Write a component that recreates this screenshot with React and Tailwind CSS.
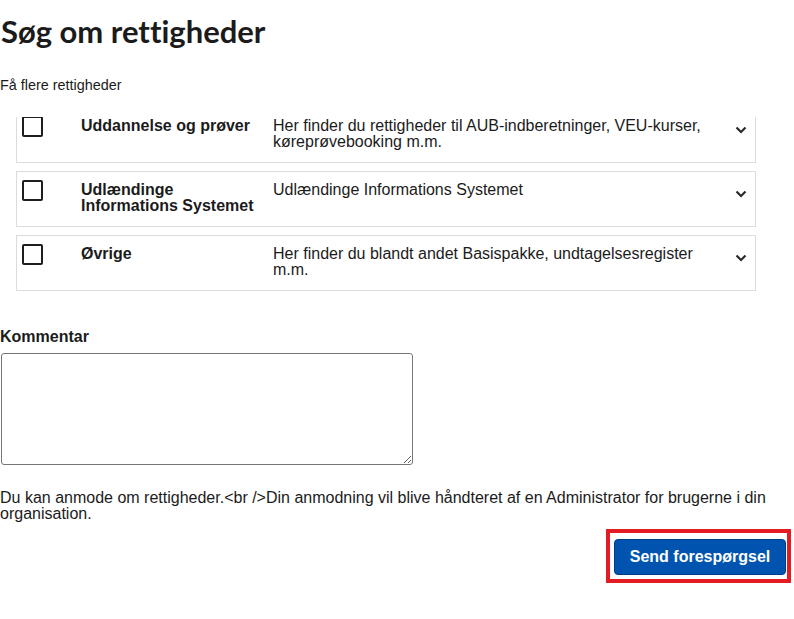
import React from 'react'

const rights = [
  {
    title: 'Uddannelse og prøver',
    text: 'Her finder du rettigheder til AUB-indberetninger, VEU-kurser, køreprøvebooking m.m.',
  },
  { title: 'Udlændinge Informations Systemet', text: 'Udlændinge Informations Systemet' },
  { title: 'Øvrige', text: 'Her finder du blandt andet Basispakke, undtagelsesregister m.m.' },
]

function Chevron() {
  return (
    <svg width="12" height="8" viewBox="0 0 12 8" className="shrink-0 mt-[10px] mr-[8px]">
      <polyline points="1.5,1.5 6,6 10.5,1.5" fill="none" stroke="#2b2b2b" strokeWidth="2.2" />
    </svg>
  )
}

function RightCard({ title, text }) {
  return (
    <div className="flex items-start h-[56px] border border-[#dcdcdc] bg-white pt-[8px]">
      <div className="shrink-0 ml-[5px] w-[21px] h-[21px] border-2 border-[#1e1e1e] rounded-[2px]" />
      <div className="shrink-0 ml-[38px] w-[192px] mt-[2px] font-bold text-[16px] leading-4 pr-2">{title}</div>
      <div className="flex-1 mt-[2px] text-[16px] leading-4 pr-[10px]">{text}</div>
      <Chevron />
    </div>
  )
}

export default function App() {
  return (
    <div className="w-[794px] min-h-[619px] bg-white text-[#1b1b1b] font-['Liberation_Sans',Arial,sans-serif]">
      <h1 className="pt-[13px] pl-[1px] font-['Lato',sans-serif] text-[31px] leading-[36px] font-bold [font-variant-ligatures:none]">Søg om rettigheder</h1>
      <p className="mt-[28px] text-[14.4px] leading-4">Få flere rettigheder</p>

      <div className="mt-[24px] h-[175px] overflow-hidden">
        <div className="-mt-[10px] ml-[16px] w-[740px] flex flex-col gap-2">
          {rights.map(r => (
            <RightCard key={r.title} {...r} />
          ))}
        </div>
      </div>

      <label className="block mt-[36px] font-bold text-[16px] leading-[18px]">Kommentar</label>
      <textarea className="block mt-[7px] ml-[1px] w-[412px] h-[112px] border border-[#767676] rounded-[3px] bg-white" />

      <p className="mt-[25px] w-[790px] text-[16px] leading-4">
        Du kan anmode om rettigheder.&lt;br /&gt;Din anmodning vil blive håndteret af en Administrator for brugerne i din organisation.
      </p>

      <div className="mt-[17px] flex justify-end pr-[8px]">
        <div className="relative">
          <button className="w-[172px] h-[36px] bg-[#0054b0] border border-[#003d84] rounded-[4px] text-white font-bold text-[16px]">
            Send forespørgsel
          </button>
          <div className="absolute -left-[8px] -right-[5px] -top-[10px] -bottom-[8px] border-4 border-[#e31b23] pointer-events-none" />
        </div>
      </div>
    </div>
  )
}
